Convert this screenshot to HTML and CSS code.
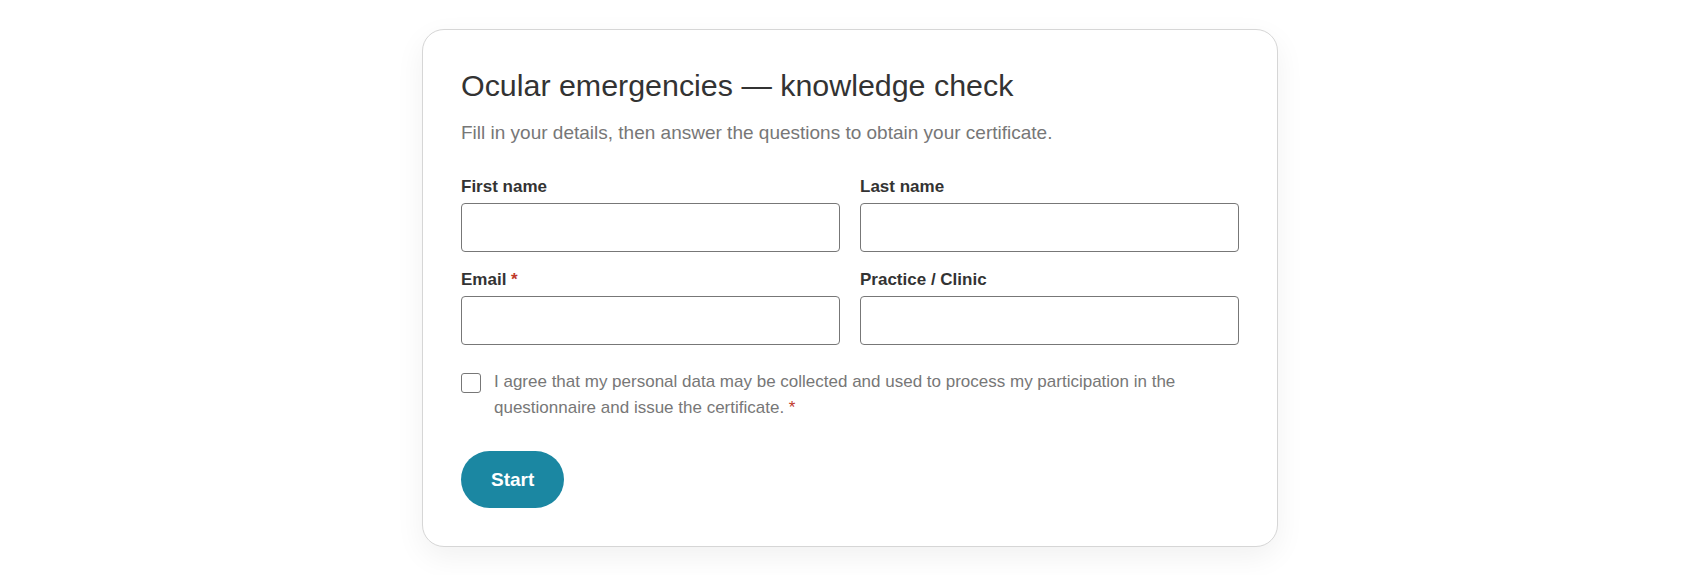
FILE: index.html
```html
<!DOCTYPE html>
<html lang="en">
<head>
    <meta charset="UTF-8">
    <meta name="viewport" content="width=device-width, initial-scale=1.0">
    <title>Ocular emergencies — knowledge check</title>
    <link rel="stylesheet" href="styles.css">
</head>
<body>
    <div class="card">
        <h1>Ocular emergencies — knowledge check</h1>
        <p class="intro">Fill in your details, then answer the questions to obtain your certificate.</p>
        <form id="details-form">
            <div class="fields">
                <div class="field">
                    <label for="first-name">First name</label>
                    <input type="text" id="first-name" name="first-name">
                </div>
                <div class="field">
                    <label for="last-name">Last name</label>
                    <input type="text" id="last-name" name="last-name">
                </div>
                <div class="field">
                    <label for="email">Email <span class="req">*</span></label>
                    <input type="email" id="email" name="email" required>
                </div>
                <div class="field">
                    <label for="practice">Practice / Clinic</label>
                    <input type="text" id="practice" name="practice">
                </div>
            </div>
            <div class="consent">
                <input type="checkbox" id="consent" name="consent" required>
                <label for="consent">I agree that my personal data may be collected and used to process my participation in the questionnaire and issue the certificate. <span class="req">*</span></label>
            </div>
            <button type="submit" class="btn-start">Start</button>
        </form>
    </div>
</body>
</html>
```

FILE: styles.css
```css
body {
    background-color: #fff;
    font-family: "Liberation Sans", Arial, sans-serif;
    margin: 0;
    padding: 29px 0;
}
.card {
    box-sizing: border-box;
    width: 856px;
    margin: 0 auto;
    padding: 38px;
    background-color: #fff;
    border: 1px solid #d6d6d6;
    border-radius: 22px;
    box-shadow: 0 10px 30px rgba(0, 0, 0, 0.06);
}
h1 {
    margin: 0;
    font-size: 30.4px;
    font-weight: 400;
    line-height: 34px;
    color: #333;
}
.intro {
    margin: 18px 0 0;
    font-size: 19px;
    line-height: 26px;
    color: #777;
}
.fields {
    display: grid;
    grid-template-columns: 1fr 1fr;
    column-gap: 20px;
    row-gap: 17px;
    margin-top: 29.5px;
}
.field label {
    display: block;
    margin-bottom: 5px;
    font-size: 17px;
    font-weight: 700;
    line-height: 22px;
    color: #333;
}
.field input {
    box-sizing: border-box;
    display: block;
    width: 100%;
    height: 49px;
    margin: 0;
    padding: 0 12px;
    font: inherit;
    border: 1.5px solid #777;
    border-radius: 4px;
    background-color: #fff;
}
.req {
    color: #c0392b;
}
.consent {
    display: flex;
    align-items: flex-start;
    gap: 13px;
    margin-top: 24px;
    font-size: 17px;
    line-height: 26px;
    color: #777;
}
.consent label {
    cursor: pointer;
}
.consent input {
    appearance: none;
    flex: none;
    box-sizing: border-box;
    width: 20px;
    height: 20px;
    margin: 4px 0 0;
    border: 1.5px solid #777;
    border-radius: 3px;
    background-color: #fff;
}
.btn-start {
    display: block;
    margin-top: 30px;
    padding: 17px 30px;
    font-family: inherit;
    font-size: 19px;
    font-weight: 700;
    line-height: 23px;
    color: #fff;
    background-color: #1b87a2;
    border: none;
    border-radius: 30px;
    cursor: pointer;
}
.btn-start:hover {
    background-color: #16738a;
}
```
